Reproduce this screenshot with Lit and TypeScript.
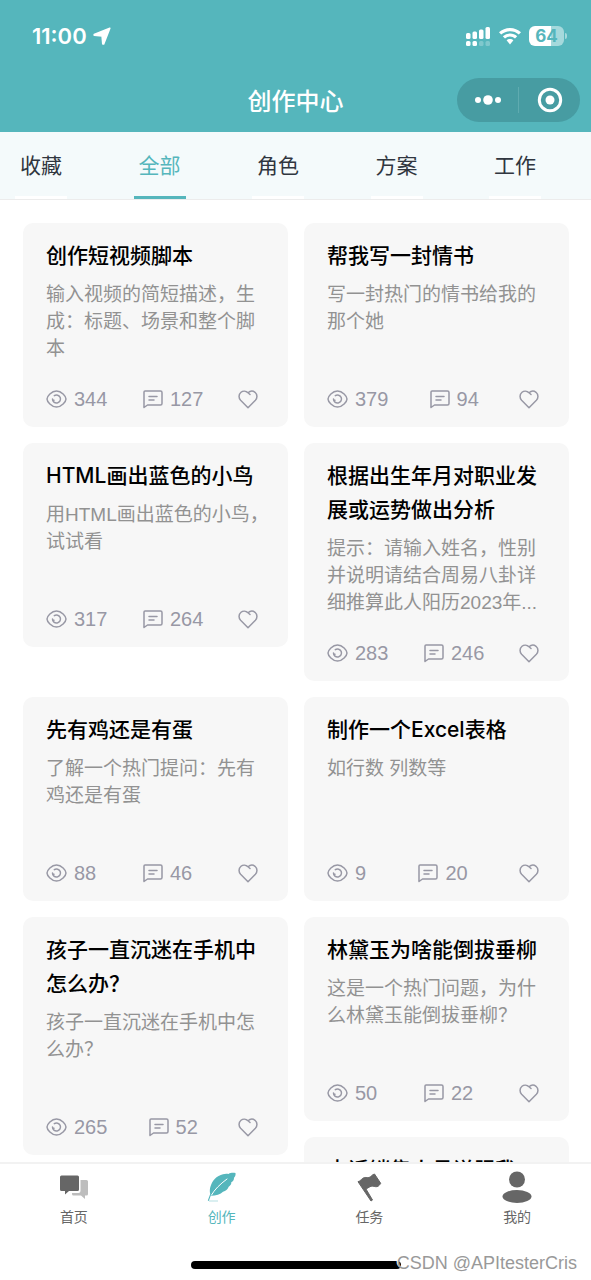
import { LitElement, html, css, svg, nothing } from "lit";
import { customElement, property } from "lit/decorators.js";

interface Prompt {
  title: string;
  text?: string;
  views?: number;
  comments?: number;
}

const PROMPTS: Prompt[] = [
  { title: "创作短视频脚本", text: "输入视频的简短描述，生成：标题、场景和整个脚本", views: 344, comments: 127 },
  { title: "帮我写一封情书", text: "写一封热门的情书给我的那个她", views: 379, comments: 94 },
  { title: "HTML画出蓝色的小鸟", text: "用HTML画出蓝色的小鸟，试试看", views: 317, comments: 264 },
  { title: "根据出生年月对职业发展或运势做出分析", text: "提示：请输入姓名，性别并说明请结合周易八卦详细推算此人阳历2023年...", views: 283, comments: 246 },
  { title: "先有鸡还是有蛋", text: "了解一个热门提问：先有鸡还是有蛋", views: 88, comments: 46 },
  { title: "制作一个Excel表格", text: "如行数 列数等", views: 9, comments: 20 },
  { title: "孩子一直沉迷在手机中怎么办？", text: "孩子一直沉迷在手机中怎么办？", views: 265, comments: 52 },
  { title: "林黛玉为啥能倒拔垂柳", text: "这是一个热门问题，为什么林黛玉能倒拔垂柳？", views: 50, comments: 22 },
  { title: "电话销售人员说服我" },
];

const TABS = ["收藏", "全部", "角色", "方案", "工作"];

const NAV = [
  {
    label: "首页",
    icon: svg`<path fill="#bdbdbd" d="M21.500 8h6A1.500 1.500 0 0 1 29 9.500v12.500a1.500 1.500 0 0 1-1.500 1.500H26v3.500l-4-3.500h-7.500A1.500 1.500 0 0 1 13 22v-1h6.500a2 2 0 0 0 2-2z"/>
      <path fill="#666" d="M2.500 3.500h16A1.500 1.500 0 0 1 20 5v12.500a1.500 1.500 0 0 1-1.500 1.500H10l-4 3.500V19H2.500A1.500 1.500 0 0 1 1 17.500V5a1.500 1.500 0 0 1 1.500-1.500z"/>`,
  },
  {
    label: "创作",
    icon: svg`<path fill="#55b6bc" d="M3.200 22C2 17 4 11 7.700 7 10 4.500 13 3.200 16 2.300c2-.8 4-.8 5.500-.3 2-1.200 4-1.300 7-1 .3 2-.3 3.500-1.500 4.700.1 2-.9 3.700-2.700 4.600.1 2-.9 3.500-2.600 4.400-.9 2.500-3 4.500-5.700 5-2.500 2.600-7 4-12.300 4L1.800 29l-1-.6z"/>
      <path fill="none" stroke="#fff" stroke-width="1" stroke-linecap="round" d="M4.500 23Q9 15 20 7"/>
      <path stroke="#55b6bc" stroke-width=".7" opacity=".6" d="M2 29h9"/>`,
  },
  {
    label: "任务",
    icon: svg`<path fill="#666" stroke="#666" stroke-linejoin="round" d="M4 9.700C6.500 9.300 8 6 10.500 5.500 12.500 5.300 13.500 6 15 5.500 17 5 18 2.500 20.500 2l6.200 9.300c-1.500 2.700-3.200 3.600-5 3.400-2.200-.6-4-.9-5.700 0L12 17l6.500 11-1.500 1z"/>`,
  },
  {
    label: "我的",
    icon: svg`<circle cx="15" cy="7.500" r="8" fill="#666"/><ellipse cx="15" cy="24.500" rx="14.500" ry="6.500" fill="#666"/>`,
  },
];

@customElement("prompt-card")
class PromptCard extends LitElement {
  @property({ attribute: false }) prompt!: Prompt;

  static styles = css`
    :host { display: block; }
    .card {
      background: #f7f7f7;
      border-radius: 10px;
      padding: 16px 18px 18px 23px;
    }
    .title {
      margin: 0;
      font: 500 21px/34px Inter, "Noto Sans CJK SC", sans-serif;
      color: #000;
    }
    .text {
      margin: 8px 0 27px;
      min-height: 81px;
      font-size: 19px;
      line-height: 27px;
      color: #929292;
    }
    .stats {
      display: flex;
      justify-content: space-between;
      align-items: center;
      height: 20px;
      padding-right: 12px;
      font-size: 20px;
      line-height: 20px;
      color: #9898a5;
    }
    .stat { display: flex; align-items: center; gap: 7px; }
    .icon {
      display: block;
      height: 20px;
      fill: none;
      stroke: currentColor;
      stroke-width: 1.5;
      stroke-linecap: round;
      stroke-linejoin: round;
    }
    .like {
      border: 0;
      padding: 0;
      background: none;
      color: inherit;
    }
  `;

  private stats(p: Prompt) {
    return html`
      <div class="stats">
        <span class="stat">
          <svg class="icon" width="21" viewBox="0 0 21 20">
            <path d="M1 10C1 7.500 5.500 2 10.500 2S20 7.500 20 10s-4.500 8-9.500 8S1 12.500 1 10z" />
            <path d="M8.300 6.700A4 4 0 1 1 6.500 10c.1 1 .7 1.400 1.500 1.200" />
          </svg>
          ${p.views}
        </span>
        <span class="stat">
          <svg class="icon" width="21" viewBox="0 0 21 20">
            <path d="M3 2h15.500A1.500 1.500 0 0 1 20 3.500v11a1.500 1.500 0 0 1-1.500 1.500H5.500L2 18.500V3a1 1 0 0 1 1-1zM7 7.500h8M7 11h5" />
          </svg>
          ${p.comments}
        </span>
        <button class="like" aria-label="喜欢">
          <svg class="icon" width="20" viewBox="0 0 20 20">
            <path d="M12 5.500 10 3.800C8 1.800 5 1.600 3 3.300.500 5.500.500 9 2.600 11.300L10 18.700l7.400-7.400C19.500 9 19.500 5.500 17 3.300 15 1.700 12.300 1.700 10 3.800" />
          </svg>
        </button>
      </div>
    `;
  }

  render() {
    const p = this.prompt;
    return html`
      <article class="card">
        <h2 class="title">${p.title}</h2>
        <p class="text">${p.text ?? nothing}</p>
        ${p.views === undefined ? nothing : this.stats(p)}
      </article>
    `;
  }
}

@customElement("app-root")
class AppRoot extends LitElement {
  static styles = css`
    :host {
      display: flex;
      flex-direction: column;
      height: 100vh;
      overflow: hidden;
      position: relative;
      background: #fff;
      font-family: "Liberation Sans", "Noto Sans CJK SC", sans-serif;
    }
    .header { background: #55b6bc; color: #fff; flex: none; }
    .status {
      display: flex;
      align-items: center;
      justify-content: space-between;
      height: 64px;
      padding: 4px 24px 0 32px;
    }
    .clock {
      display: flex;
      align-items: center;
      gap: 6px;
      font: 600 22px/28px Inter, sans-serif;
    }
    .signals { display: flex; align-items: center; gap: 8px; }
    .glyph { display: block; fill: currentColor; }
    .battery { display: flex; align-items: center; gap: 1px; }
    .level {
      width: 35px;
      border-radius: 6px;
      background: linear-gradient(90deg, #fff 64%, #a5d9dc 64%);
      color: #55b6bc;
      font: 700 17px/20px Inter, sans-serif;
      text-align: center;
    }
    .cap { width: 2px; height: 6px; border-radius: 0 2px 2px 0; background: #a5d9dc; }
    .bar {
      display: grid;
      grid-template-columns: 1fr auto 1fr;
      align-items: center;
      height: 64px;
      padding: 0 11px;
    }
    .heading {
      grid-column: 2;
      margin: 0;
      font: 500 24px/32px "Noto Sans CJK SC", sans-serif;
    }
    .capsule {
      justify-self: end;
      display: flex;
      align-items: center;
      width: 123px;
      height: 44px;
      border-radius: 22px;
      background: #479ca2;
    }
    .action {
      flex: 1;
      display: flex;
      justify-content: center;
      padding: 0;
      border: 0;
      background: none;
      color: #fff;
    }
    .action + .action { border-left: 1px solid #5fabb0; }
    .tabs {
      flex: none;
      display: flex;
      justify-content: space-between;
      padding: 0 50px 0 15px;
      background: #f4fafb;
      border-bottom: 1px solid #ececec;
    }
    .tab {
      width: 52px;
      height: 67px;
      padding: 0;
      border: 0;
      border-bottom: 3px solid #fff;
      background: none;
      font: 400 21px/30px "Noto Sans CJK SC", sans-serif;
      color: #30363f;
      white-space: nowrap;
    }
    .tab.active { color: #55b6bc; border-color: #55b6bc; }
    .list {
      flex: 1;
      min-height: 0;
      overflow-y: auto;
      scrollbar-width: none;
      padding: 23px 14px 0 15px;
    }
    .item {
      float: left;
      box-sizing: border-box;
      width: 50%;
      padding: 0 8px 16px;
    }
    .footer {
      flex: none;
      border-top: 2px solid #f2f2f2;
      background: #fff;
    }
    .nav { display: flex; }
    .link {
      flex: 1;
      display: flex;
      flex-direction: column;
      align-items: center;
      gap: 5px;
      padding-top: 8px;
      font-size: 14px;
      line-height: 20px;
      color: #666;
      text-decoration: none;
    }
    .link.active { color: #55b6bc; }
    .pic { display: block; overflow: visible; }
    .home {
      width: 210px;
      height: 8px;
      margin: 34px auto 11px;
      border-radius: 4px;
      background: #000;
    }
    .mark {
      position: absolute;
      right: 14px;
      bottom: 6px;
      font-size: 18px;
      line-height: 22px;
      color: #999;
      text-shadow: -1px -1px 0 #fff;
    }
  `;

  render() {
    return html`
      <header class="header">
        <div class="status">
          <span class="clock">
            11:00
            <svg class="glyph" width="18" height="18" viewBox="0 0 18 18">
              <path stroke="currentColor" stroke-width="1.600" stroke-linejoin="round" d="M16.800 1.200 1.200 7.500v.8l7.900.7.700 8h.9z" />
            </svg>
          </span>
          <span class="signals">
            <svg class="glyph" width="25" height="19" viewBox="0 0 25 19">
              <rect x="0" y="6" width="4.500" height="6" rx="1.500" />
              <rect x="6.500" y="4.500" width="4.500" height="7.500" rx="1.500" />
              <rect x="13" y="2.500" width="4.500" height="9.500" rx="1.500" />
              <rect x="19.500" y="0" width="4.500" height="12" rx="1.500" />
              <rect x="0" y="14" width="4.500" height="5" rx="1.500" />
              <rect x="6.500" y="14" width="4.500" height="5" rx="1.500" />
              <rect x="13" y="14" width="4.500" height="5" rx="1.500" opacity=".25" />
              <rect x="19.500" y="14" width="4.500" height="5" rx="1.500" opacity=".25" />
            </svg>
            <svg class="glyph" width="22" height="17" viewBox="0 0 22 17">
              <path d="M11 0c4.300 0 8.100 1.600 11 4.300l-2.200 2.300A12.700 12.700 0 0 0 11 3.200c-3.400 0-6.500 1.300-8.800 3.400L0 4.300C2.900 1.600 6.700 0 11 0z" />
              <path d="M11 5.500c2.800 0 5.300 1 7.200 2.800L16 10.500a7.400 7.400 0 0 0-10 0L3.800 8.300A10.500 10.500 0 0 1 11 5.500z" />
              <path d="M11 11c1.300 0 2.500.5 3.400 1.300L11 16.500l-3.400-4.200C8.500 11.500 9.700 11 11 11z" />
            </svg>
            <span class="battery"><span class="level">64</span><span class="cap"></span></span>
          </span>
        </div>
        <div class="bar">
          <h1 class="heading">创作中心</h1>
          <div class="capsule">
            <button class="action" aria-label="更多">
              <svg class="glyph" width="28" height="26" viewBox="0 0 28 26">
                <circle cx="4" cy="13" r="3" /><circle cx="14" cy="13" r="4.800" /><circle cx="24" cy="13" r="3" />
              </svg>
            </button>
            <button class="action" aria-label="关闭">
              <svg class="glyph" width="26" height="26" viewBox="0 0 26 26">
                <circle cx="13" cy="13" r="10.700" fill="none" stroke="currentColor" stroke-width="3" />
                <circle cx="13" cy="13" r="4.500" />
              </svg>
            </button>
          </div>
        </div>
      </header>
      <nav class="tabs">
        ${TABS.map((t, i) => html`<button class="tab ${i === 1 ? "active" : ""}">${t}</button>`)}
      </nav>
      <main class="list">
        ${PROMPTS.map((p) => html`<prompt-card class="item" .prompt=${p}></prompt-card>`)}
      </main>
      <footer class="footer">
        <nav class="nav">
          ${NAV.map(
            (n, i) => html`<a class="link ${i === 1 ? "active" : ""}" href="#">
              <svg class="pic" width="30" height="30" viewBox="0 0 30 30">${n.icon}</svg>
              ${n.label}
            </a>`
          )}
        </nav>
        <div class="home"></div>
      </footer>
      <div class="mark">CSDN @APItesterCris</div>
    `;
  }
}
